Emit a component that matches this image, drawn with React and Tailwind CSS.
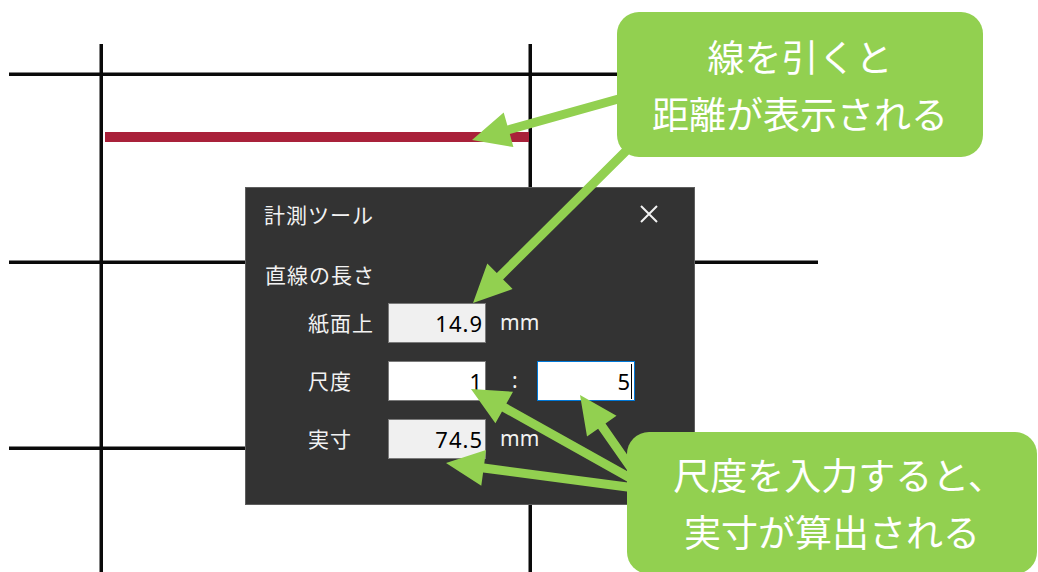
import React from "react";

const GREEN = "#92d050";

function arrowPoints(tail, tip, w = 4.5, L = 38, H = 18) {
  const dx = tip[0] - tail[0];
  const dy = tip[1] - tail[1];
  const len = Math.hypot(dx, dy);
  const ux = dx / len;
  const uy = dy / len;
  const nx = -uy;
  const ny = ux;
  const bx = tip[0] - ux * L;
  const by = tip[1] - uy * L;
  const pts = [
    [tail[0] + nx * w, tail[1] + ny * w],
    [bx + nx * w, by + ny * w],
    [bx + nx * H, by + ny * H],
    [tip[0], tip[1]],
    [bx - nx * H, by - ny * H],
    [bx - nx * w, by - ny * w],
    [tail[0] - nx * w, tail[1] - ny * w],
  ];
  return pts.map((p) => `${p[0].toFixed(1)},${p[1].toFixed(1)}`).join(" ");
}

const arrows = [
  { tail: [622, 98], tip: [472, 140] },
  { tail: [632, 145], tip: [473, 303] },
  { tail: [648, 488], tip: [471, 389] },
  { tail: [645, 488], tip: [580, 395] },
  { tail: [650, 490], tip: [446, 463] },
];

function Field({ value, white, active, caret }) {
  return (
    <div
      className={
        "h-full w-[98px] flex items-center justify-end pr-[2px] text-[22px] text-black border " +
        (white ? "bg-white " : "bg-[#f0f0f0] ") +
        (active ? "border-[#0078d7]" : "border-[#7a7a7a]")
      }
    >
      <span className="leading-none">{value}</span>
      {caret ? <span className="w-[1px] h-[35px] bg-black ml-[0px]" /> : null}
    </div>
  );
}

export default function App() {
  const cjk = { fontFamily: '"Noto Sans CJK JP", "Noto Sans", sans-serif' };
  const latin = { fontFamily: '"Noto Sans", "Noto Sans CJK JP", sans-serif' };
  return (
    <div className="relative w-[1038px] h-[572px] overflow-hidden bg-white">
      {/* grid drawing */}
      <svg className="absolute inset-0" width="1038" height="572">
        <rect x="9" y="72.5" width="615" height="3.5" fill="#0a0a0a" />
        <rect x="9" y="260.5" width="809" height="3.5" fill="#0a0a0a" />
        <rect x="9" y="446.5" width="700" height="3.5" fill="#0a0a0a" />
        <rect x="99.5" y="44" width="3.5" height="530" fill="#0a0a0a" />
        <rect x="528.5" y="44" width="3.5" height="530" fill="#0a0a0a" />
        <rect x="105" y="132" width="424" height="10" fill="#a9213a" />
      </svg>

      {/* dialog */}
      <div
        className="absolute left-[245px] top-[187px] w-[450px] h-[318px] bg-[#333333] border border-[#5e5e5e] text-[#f2f2f2] flex flex-col"
        style={cjk}
      >
        <div className="flex items-center justify-between h-[52px] pl-[18px] pr-[36px]">
          <span className="text-[21px] tracking-[1px] leading-[26px]">計測ツール</span>
          <svg width="18" height="18" viewBox="0 0 18 18">
            <path d="M1 1 L17 17 M17 1 L1 17" stroke="#f2f2f2" strokeWidth="2" />
          </svg>
        </div>
        <div className="pl-[19px] mt-[21px] text-[21px] tracking-[1px] leading-[26px]">直線の長さ</div>
        <div className="mt-[16px] flex flex-col gap-[18px] pl-[62px] text-[21px] tracking-[1px]">
          <div className="flex items-center h-[40px]">
            <span className="w-[80px]">紙面上</span>
            <div className="h-full" style={latin}>
              <Field value="14.9" />
            </div>
            <span className="ml-[14px] text-[21px] tracking-normal" style={latin}>mm</span>
          </div>
          <div className="flex items-center h-[40px]">
            <span className="w-[80px]">尺度</span>
            <div className="h-full flex items-center" style={latin}>
              <Field value="1" white />
              <span className="w-[51px] pl-[26px] text-[21px]">:</span>
              <Field value="5" white active caret />
            </div>
          </div>
          <div className="flex items-center h-[40px]">
            <span className="w-[80px]">実寸</span>
            <div className="h-full" style={latin}>
              <Field value="74.5" />
            </div>
            <span className="ml-[14px] text-[21px] tracking-normal" style={latin}>mm</span>
          </div>
        </div>
      </div>

      {/* arrows */}
      <svg className="absolute inset-0" width="1038" height="572">
        {arrows.map((a, i) => (
          <polygon key={i} points={arrowPoints(a.tail, a.tip)} fill={GREEN} />
        ))}
      </svg>

      {/* callouts */}
      <div
        className="absolute left-[617px] top-[12px] w-[366px] h-[145px] rounded-[22px] bg-[#92d050] text-white flex flex-col items-center justify-center text-[37px] leading-[57px]"
        style={cjk}
      >
        <span>線を引くと</span>
        <span>距離が表示される</span>
      </div>
      <div
        className="absolute left-[627px] top-[432px] w-[410px] h-[142px] rounded-[22px] bg-[#92d050] text-white flex flex-col items-center justify-center text-[37px] leading-[57px]"
        style={cjk}
      >
        <span className="pl-[14px]">尺度を入力すると、</span>
        <span>実寸が算出される</span>
      </div>
    </div>
  );
}
